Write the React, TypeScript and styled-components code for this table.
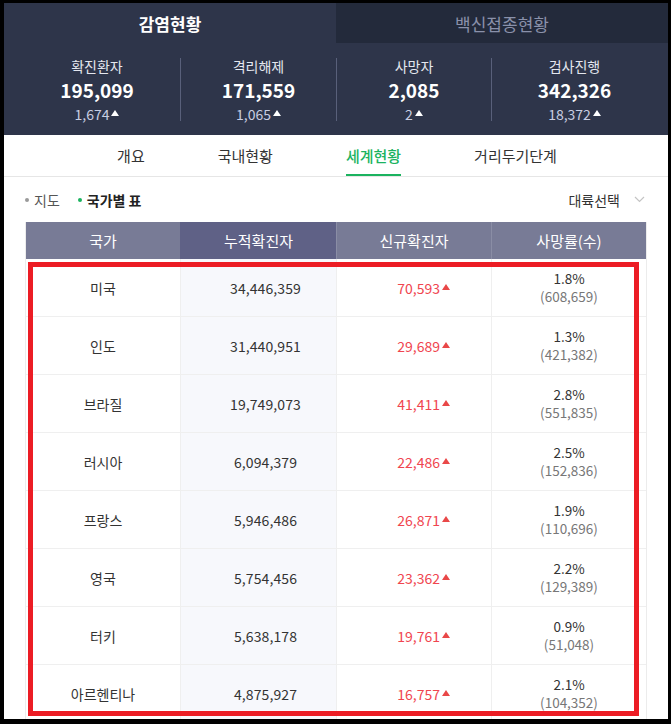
import { FC } from 'react'
import styled, { createGlobalStyle } from 'styled-components'

const GlobalStyle = createGlobalStyle`
  html, body {
    margin: 0;
    padding: 0;
    background: #000;
  }
  body {
    font-family: 'Noto Sans CJK KR', 'Noto Sans', sans-serif;
  }
`

const Frame = styled.div`
  width: 671px;
  height: 724px;
  box-sizing: border-box;
  padding: 3px 3px 5px 4px;
  background: #000;
`

const Panel = styled.div`
  position: relative;
  width: 664px;
  height: 716px;
  overflow: hidden;
  background: #fff;
`

const TopTabs = styled.div`
  display: grid;
  grid-template-columns: 332px 332px;
  height: 40px;
`

const TopTab = styled.div<{ $active?: boolean }>`
  display: flex;
  align-items: center;
  justify-content: center;
  font-size: 17px;
  font-weight: ${(p) => (p.$active ? 700 : 400)};
  color: ${(p) => (p.$active ? '#ffffff' : '#8a91aa')};
  background: ${(p) => (p.$active ? '#2e354a' : '#232a3b')};
`

const Stats = styled.div`
  display: grid;
  grid-template-columns: 166px 156px 155px 166px;
  padding: 15px 11px 11px 10px;
  background: #2e354a;
  height: 92px;
  box-sizing: border-box;
`

const StatCol = styled.div<{ $first?: boolean }>`
  display: flex;
  flex-direction: column;
  align-items: center;
  border-left: ${(p) => (p.$first ? 'none' : '1px solid #59607a')};
  height: 63px;
`

const StatLabel = styled.div`
  font-size: 14px;
  line-height: 16px;
  color: #e4e7ef;
`

const StatValue = styled.div`
  font-size: 19px;
  font-weight: 700;
  line-height: 31px;
  color: #ffffff;
`

const StatDelta = styled.div`
  display: flex;
  align-items: center;
  font-size: 14px;
  line-height: 18px;
  color: #c9cee2;
`

const UpArrow = styled.span<{ $color: string }>`
  display: inline-block;
  width: 0;
  height: 0;
  border-left: 4px solid transparent;
  border-right: 4px solid transparent;
  border-bottom: 6px solid ${(p) => p.$color};
  margin-left: 2px;
  margin-bottom: 2px;
`

const SubNav = styled.div`
  display: flex;
  justify-content: center;
  gap: 73px;
  height: 42px;
  border-bottom: 1px solid #e6e6e6;
  box-sizing: border-box;
  padding-left: 2px;
`

const SubTab = styled.div<{ $active?: boolean }>`
  display: flex;
  align-items: center;
  height: 41px;
  font-size: 15px;
  color: ${(p) => (p.$active ? '#1bb35f' : '#333')};
  font-weight: ${(p) => (p.$active ? 500 : 400)};
  border-bottom: 2px solid ${(p) => (p.$active ? '#1bb35f' : 'transparent')};
  box-sizing: border-box;
  padding-top: 2px;
  margin-bottom: -1px;
`

const FilterRow = styled.div`
  display: flex;
  align-items: center;
  justify-content: space-between;
  height: 45px;
  padding: 0 23px 0 21px;
`

const ViewToggle = styled.div`
  display: flex;
  align-items: center;
  gap: 18px;
`

const ViewOption = styled.div<{ $active?: boolean }>`
  display: flex;
  align-items: center;
  gap: 5px;
  font-size: 14px;
  color: ${(p) => (p.$active ? '#222' : '#555')};
  font-weight: ${(p) => (p.$active ? 700 : 400)};

  &::before {
    content: '';
    width: 4px;
    height: 4px;
    border-radius: 50%;
    background: ${(p) => (p.$active ? '#1bb35f' : '#9a9a9a')};
  }
`

const Select = styled.div`
  display: flex;
  align-items: center;
  gap: 14px;
  font-size: 14px;
  color: #333;
`

const Table = styled.div`
  margin: 0 21px;
  border-right: 1px solid #ececec;
  border-left: 1px solid #ececec;
`

const Grid = styled.div`
  display: grid;
  grid-template-columns: 154px 156px 155px 155px;
`

const HeadCell = styled.div<{ $active?: boolean }>`
  height: 37px;
  display: flex;
  align-items: center;
  justify-content: center;
  font-size: 15px;
  color: #fff;
  background: ${(p) => (p.$active ? '#5f6186' : '#787b96')};
  border-left: 1px solid ${(p) => (p.$active ? '#5f6186' : '#8a8da5')};
  &:first-child {
    border-left: none;
  }
`

const Cell = styled.div<{ $align?: 'center' | 'right'; $shade?: boolean }>`
  height: 58px;
  box-sizing: border-box;
  display: flex;
  flex-direction: column;
  align-items: ${(p) => (p.$align === 'right' ? 'flex-end' : 'center')};
  justify-content: center;
  border-bottom: 1px solid #efefef;
  border-left: 1px solid #efefef;
  background: ${(p) => (p.$shade ? '#f7f8fc' : '#fff')};
  font-size: 14px;
  color: #333;
  &:nth-child(4n + 1) {
    border-left: none;
  }
`

const Total = styled.span`
  padding-left: 14px;
  letter-spacing: 0.1px;
`

const NewCases = styled.span`
  display: flex;
  align-items: center;
  padding-right: 41px;
  color: #f0454f;
`

const Rate = styled.span`
  font-size: 13.5px;
  line-height: 17px;
  color: #333;
`

const RateCount = styled.span`
  font-size: 13.5px;
  line-height: 18px;
  color: #777;
`

const Highlight = styled.div`
  position: absolute;
  left: 24px;
  top: 259px;
  width: 611px;
  height: 454px;
  box-sizing: border-box;
  border: 5px solid #ec1c24;
  pointer-events: none;
`

interface Stat {
  label: string
  value: string
  delta: string
}

const stats: Stat[] = [
  { label: '확진환자', value: '195,099', delta: '1,674' },
  { label: '격리해제', value: '171,559', delta: '1,065' },
  { label: '사망자', value: '2,085', delta: '2' },
  { label: '검사진행', value: '342,326', delta: '18,372' },
]

interface Row {
  country: string
  total: string
  newCases: string
  rate: string
  deaths: string
}

const rows: Row[] = [
  { country: '미국', total: '34,446,359', newCases: '70,593', rate: '1.8%', deaths: '(608,659)' },
  { country: '인도', total: '31,440,951', newCases: '29,689', rate: '1.3%', deaths: '(421,382)' },
  { country: '브라질', total: '19,749,073', newCases: '41,411', rate: '2.8%', deaths: '(551,835)' },
  { country: '러시아', total: '6,094,379', newCases: '22,486', rate: '2.5%', deaths: '(152,836)' },
  { country: '프랑스', total: '5,946,486', newCases: '26,871', rate: '1.9%', deaths: '(110,696)' },
  { country: '영국', total: '5,754,456', newCases: '23,362', rate: '2.2%', deaths: '(129,389)' },
  { country: '터키', total: '5,638,178', newCases: '19,761', rate: '0.9%', deaths: '(51,048)' },
  { country: '아르헨티나', total: '4,875,927', newCases: '16,757', rate: '2.1%', deaths: '(104,352)' },
]

const Chevron: FC = () => (
  <svg width="11" height="7" viewBox="0 0 11 7" fill="none">
    <path d="M1 1l4.5 4.5L10 1" stroke="#c4c4c4" strokeWidth="1.2" />
  </svg>
)

const App: FC = () => {
  return (
    <Frame>
      <GlobalStyle />
      <Panel>
        <TopTabs>
          <TopTab $active>감염현황</TopTab>
          <TopTab>백신접종현황</TopTab>
        </TopTabs>
        <Stats>
          {stats.map((s, i) => (
            <StatCol key={s.label} $first={i === 0}>
              <StatLabel>{s.label}</StatLabel>
              <StatValue>{s.value}</StatValue>
              <StatDelta>
                {s.delta}
                <UpArrow $color="#ffffff" />
              </StatDelta>
            </StatCol>
          ))}
        </Stats>
        <SubNav>
          <SubTab>개요</SubTab>
          <SubTab>국내현황</SubTab>
          <SubTab $active>세계현황</SubTab>
          <SubTab>거리두기단계</SubTab>
        </SubNav>
        <FilterRow>
          <ViewToggle>
            <ViewOption>지도</ViewOption>
            <ViewOption $active>국가별 표</ViewOption>
          </ViewToggle>
          <Select>
            대륙선택
            <Chevron />
          </Select>
        </FilterRow>
        <Table>
          <Grid>
            <HeadCell>국가</HeadCell>
            <HeadCell $active>누적확진자</HeadCell>
            <HeadCell>신규확진자</HeadCell>
            <HeadCell>사망률(수)</HeadCell>
          </Grid>
          <Grid>
            {rows.map((r) => [
              <Cell key={r.country + 'c'}>{r.country}</Cell>,
              <Cell key={r.country + 't'} $shade>
                <Total>{r.total}</Total>
              </Cell>,
              <Cell key={r.country + 'n'} $align="right">
                <NewCases>
                  {r.newCases}
                  <UpArrow $color="#e94848" />
                </NewCases>
              </Cell>,
              <Cell key={r.country + 'r'}>
                <Rate>{r.rate}</Rate>
                <RateCount>{r.deaths}</RateCount>
              </Cell>,
            ])}
          </Grid>
        </Table>
        <Highlight />
      </Panel>
    </Frame>
  )
}

export default App
